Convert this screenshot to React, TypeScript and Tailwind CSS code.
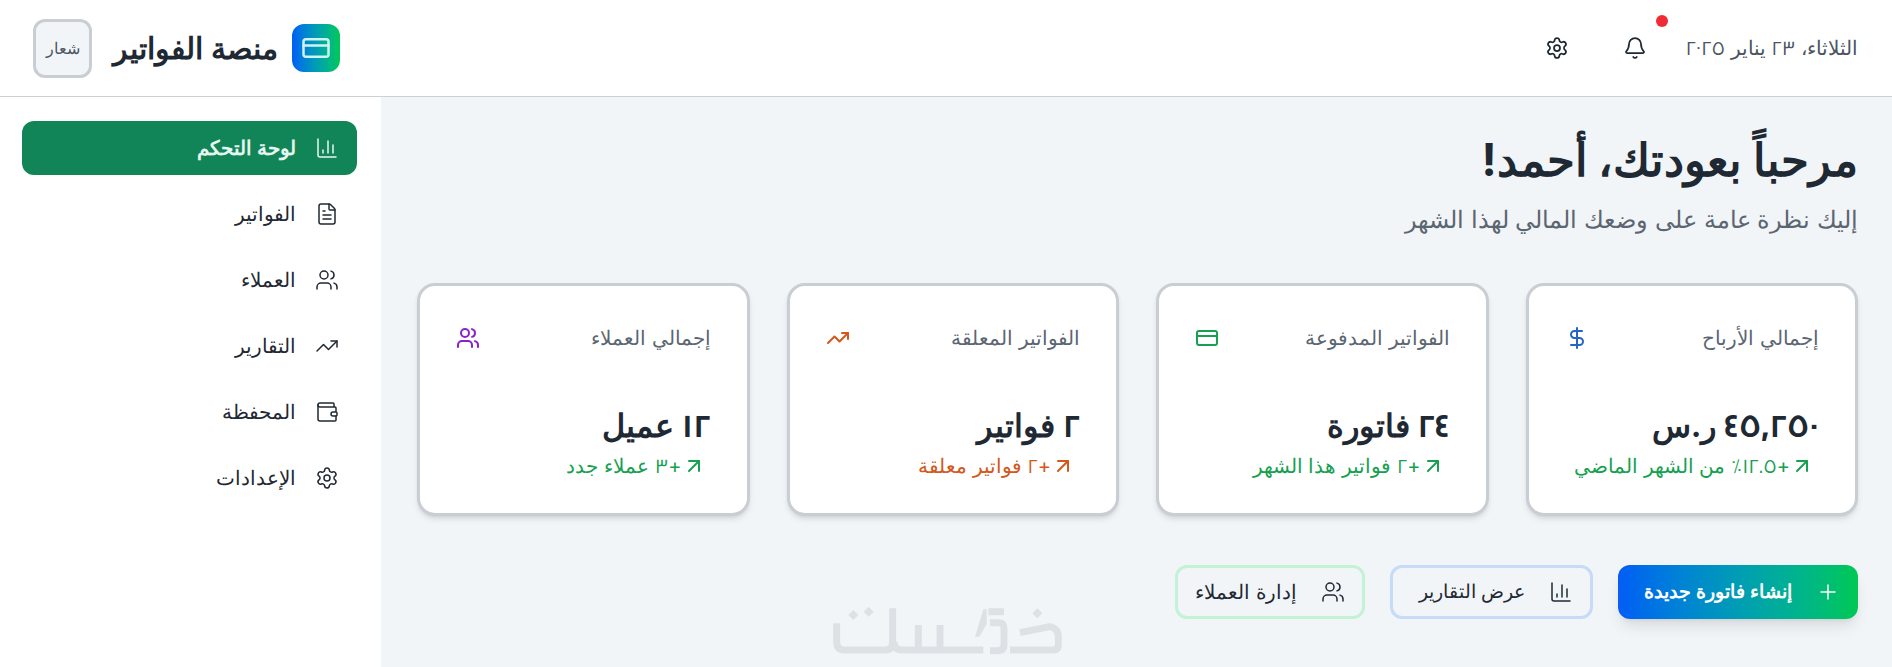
import { ArrowUpRight, Bell, ChartColumn, CreditCard, DollarSign, FileText, Plus, Settings, TrendingUp, Users, Wallet } from "lucide-react";

const navItems = [
  { name: "لوحة التحكم", icon: ChartColumn, active: true },
  { name: "الفواتير", icon: FileText },
  { name: "العملاء", icon: Users },
  { name: "التقارير", icon: TrendingUp },
  { name: "المحفظة", icon: Wallet },
  { name: "الإعدادات", icon: Settings },
];

const stats = [
  { label: "إجمالي الأرباح", value: "٤٥,٢٥٠ ر.س", note: "+١٢.٥٪ من الشهر الماضي", icon: DollarSign, iconClass: "text-[#2563c4]", noteClass: "text-[#16a050]" },
  { label: "الفواتير المدفوعة", value: "٢٤ فاتورة", note: "+٢ فواتير هذا الشهر", icon: CreditCard, iconClass: "text-[#16a050]", noteClass: "text-[#16a050]" },
  { label: "الفواتير المعلقة", value: "٢ فواتير", note: "+٢ فواتير معلقة", icon: TrendingUp, iconClass: "text-[#d2581c]", noteClass: "text-[#d2581c]" },
  { label: "إجمالي العملاء", value: "١٢ عميل", note: "+٣ عملاء جدد", icon: Users, iconClass: "text-[#8a22c9]", noteClass: "text-[#16a050]" },
];

// digits use another face than the letters
function Digits({ text }: { text: string }) {
  return (
    <span>
      {text.split(/([٠-٩][٠-٩.,٪]*)/).map((part, i) =>
        i % 2 ? <span key={i} className="font-['Cairo',sans-serif]">{part}</span> : part
      )}
    </span>
  );
}

function Watermark() {
  return (
    <svg viewBox="0 0 750 201" className="absolute left-[820px] top-[600px] h-[67px] w-[250px]" fill="none" stroke="#dde1e5" strokeWidth="21">
      <path d="M50 70V125Q50 150 75 150H195Q218 150 218 125V25" />
      <path d="M222 125Q222 150 247 150H490M295 75V150M360 75V150" />
      <path d="M505 35H552M510 68H535Q552 68 552 85V135Q552 152 535 152H510" />
      <path d="M570 150H700Q715 150 715 135V110Q715 85 690 80L600 98" />
      <path d="M490 28H500V72L478 110H465Z" fill="#dde1e5" stroke="none" />
      <path d="M100 30L115 45L100 60L85 45ZM146 20L161 35L146 50L131 35ZM652 25L667 40L652 55L637 40Z" fill="#dde1e5" stroke="none" />
    </svg>
  );
}

export default function App() {
  return (
    <div dir="rtl" className="relative h-[667px] overflow-hidden bg-[#f2f5f8] text-[#1f2933] font-['Inter',sans-serif]">
      <header className="flex h-[97px] items-center justify-between border-b border-[#ccd0d5] bg-white pr-[34px] pl-[33px]">
        <div className="flex items-center">
          <span className="text-[20px] text-[#4b5563]"><Digits text="الثلاثاء، ٢٣ يناير ٢٠٢٥" /></span>
          <button className="relative mr-[26px] flex h-12 w-12 items-center justify-center">
            <Bell size={24} strokeWidth={1.75} />
            <span className="absolute -top-[9px] -right-[9px] h-3 w-3 rounded-full bg-[#ef2b36]" />
          </button>
          <button className="mr-[30px] flex h-12 w-12 items-center justify-center">
            <Settings size={24} strokeWidth={1.75} />
          </button>
        </div>
        <div className="flex items-center">
          <div className="flex h-12 w-12 items-center justify-center rounded-xl bg-gradient-to-r from-[#0a5cf5] to-[#00c853]">
            <CreditCard size={30} strokeWidth={2} className="text-[#d0f2f0]" />
          </div>
          <h1 className="mr-[14px] text-[30px] font-semibold">منصة الفواتير</h1>
          <div className="mr-[21px] flex h-[59px] w-[59px] items-center justify-center rounded-xl border-[3px] border-[#c9ced4] bg-[#f2f5f8] text-[16px] text-[#4b5563]">شعار</div>
        </div>
      </header>
      <div className="flex h-[570px] flex-row-reverse">
        <aside className="w-[381px] shrink-0 bg-white pt-6 pr-6 pl-[22px]">
          <nav className="flex flex-col gap-3">
            {navItems.map((item) => (
              <a key={item.name} className={`flex h-[54px] items-center gap-[19px] rounded-xl px-[18px] text-[20px] ${item.active ? "bg-[#118558] font-semibold text-[#e6f7f0]" : "text-[#1f2933]"}`}>
                <item.icon size={24} strokeWidth={1.5} />
                {item.name}
              </a>
            ))}
          </nav>
        </aside>
        <main className="flex-1 pt-9 pr-[34px] pl-9">
          <h2 className="text-[45px] leading-[54px] font-bold">مرحباً بعودتك، أحمد!</h2>
          <p className="mt-[15px] text-[24px] leading-9 text-[#5b6672]">إليك نظرة عامة على وضعك المالي لهذا الشهر</p>
          <div className="mt-[45px] grid grid-cols-4 gap-[37px]">
            {stats.map((s) => (
              <div key={s.label} className="h-[233px] rounded-[18px] border-[3px] border-[#c9ced4] bg-white px-9 pt-[38px] shadow-md">
                <div className="flex h-7 items-center justify-between">
                  <span className="text-[20px] leading-7 text-[#5b6672]">{s.label}</span>
                  <s.icon size={24} strokeWidth={2} className={s.iconClass} />
                </div>
                <div className="mt-[53px] text-[32px] leading-10 font-bold"><Digits text={s.value} /></div>
                <div className={`mt-[6px] flex h-7 items-center pr-[5px] text-[20px] leading-7 ${s.noteClass}`}>
                  <ArrowUpRight size={24} strokeWidth={2} />
                  <Digits text={s.note} />
                </div>
              </div>
            ))}
          </div>
          <div className="mt-[49px] flex gap-[25px]">
            <button className="flex h-[54px] w-[240px] items-center gap-6 rounded-xl bg-gradient-to-r from-[#0a5cf5] to-[#00c853] px-[18px] text-[19px] font-semibold whitespace-nowrap text-white shadow-lg">
              <Plus size={24} strokeWidth={1.5} />
              إنشاء فاتورة جديدة
            </button>
            <button className="flex h-[54px] w-[203px] items-center gap-6 rounded-xl border-[3px] border-[#c6dbf7] px-[17px] text-[19px] whitespace-nowrap">
              <ChartColumn size={24} strokeWidth={1.5} />
              عرض التقارير
            </button>
            <button className="flex h-[54px] w-[190px] items-center gap-6 rounded-xl border-[3px] border-[#c3f2d4] px-[17px] text-[20px] whitespace-nowrap">
              <Users size={24} strokeWidth={1.5} />
              إدارة العملاء
            </button>
          </div>
        </main>
      </div>
      <Watermark />
    </div>
  );
}
